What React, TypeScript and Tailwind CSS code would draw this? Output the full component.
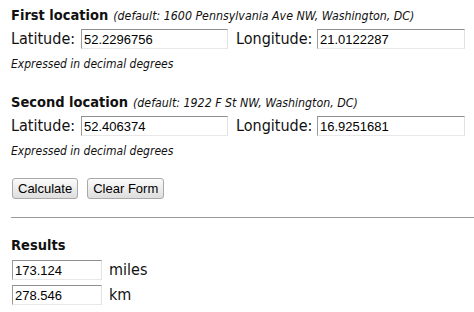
import React, { useState } from 'react';

const labelFont = { fontFamily: '"DejaVu Sans Condensed", "DejaVu Sans", Tahoma, sans-serif' };
const inputFont = { fontFamily: '"Liberation Sans", Arial, sans-serif' };

const inputClass =
  'box-border h-[20px] px-[2px] py-0 text-[13px] leading-[18px] text-black bg-white border border-t-[#8f8f8f] border-l-[#9a9a9a] border-r-[#e2e2e2] border-b-[#e8e8e8] outline-none';

const buttonClass =
  'box-border h-[21px] px-[5px] py-0 text-[13px] leading-[19px] text-black rounded-[3px] border border-[#a9a9a9] bg-gradient-to-b from-[#fbfbfb] to-[#dedede]';

interface LocationProps {
  title: string;
  hint: string;
  lat: string;
  lng: string;
  onLat: (v: string) => void;
  onLng: (v: string) => void;
}

const Location: React.FC<LocationProps> = ({ title, hint, lat, lng, onLat, onLng }) => (
  <div className="flex flex-col">
    <div className="flex items-baseline h-[20px] leading-[20px]">
      <span className="text-[14.5px] font-bold text-[#111]">{title}</span>
      <span className="ml-[5px] text-[12.3px] italic text-[#111]">(default: {hint})</span>
    </div>
    <div className="flex items-center mt-[4px] h-[20px] leading-[20px]">
      <span className="text-[16px] text-[#111] w-[70px]">Latitude:</span>
      <input
        className={`${inputClass} w-[147px]`}
        style={inputFont}
        value={lat}
        onChange={(e) => onLat(e.target.value)}
      />
      <span className="text-[16px] text-[#111] ml-[8px] w-[81px]">Longitude:</span>
      <input
        className={`${inputClass} w-[148px]`}
        style={inputFont}
        value={lng}
        onChange={(e) => onLng(e.target.value)}
      />
    </div>
    <div className="mt-[8px] h-[14px] leading-[14px] text-[12px] italic text-[#111]">
      Expressed in decimal degrees
    </div>
  </div>
);

export default function App() {
  const [lat1, setLat1] = useState('52.2296756');
  const [lng1, setLng1] = useState('21.0122287');
  const [lat2, setLat2] = useState('52.406374');
  const [lng2, setLng2] = useState('16.9251681');

  return (
    <div className="w-[474px] h-[312px] overflow-hidden bg-white" style={labelFont}>
      <div className="pl-[11px] pt-[5px]">
        <Location
          title="First location"
          hint="1600 Pennsylvania Ave NW, Washington, DC"
          lat={lat1}
          lng={lng1}
          onLat={setLat1}
          onLng={setLng1}
        />
        <div className="mt-[21px]">
          <Location
            title="Second location"
            hint="1922 F St NW, Washington, DC"
            lat={lat2}
            lng={lng2}
            onLat={setLat2}
            onLng={setLng2}
          />
        </div>
        <div className="flex gap-[9px] mt-[20px] pl-[1px]" style={inputFont}>
          <button className={buttonClass}>Calculate</button>
          <button className={buttonClass}>Clear Form</button>
        </div>
        <hr className="mt-[18px] border-0 border-t border-[#9a9a9a]" />
        <div className="mt-[17px] text-[14.5px] font-bold text-[#111] h-[20px] leading-[20px]">Results</div>
        <div className="flex flex-col gap-[5px] mt-[5px] pl-[1px]">
          <div className="flex items-center h-[20px] leading-[20px]">
            <input className={`${inputClass} w-[90px]`} style={inputFont} defaultValue="173.124" />
            <span className="ml-[7px] text-[16px] text-[#111]">miles</span>
          </div>
          <div className="flex items-center h-[20px] leading-[20px]">
            <input className={`${inputClass} w-[90px]`} style={inputFont} defaultValue="278.546" />
            <span className="ml-[7px] text-[16px] text-[#111]">km</span>
          </div>
        </div>
      </div>
    </div>
  );
}
